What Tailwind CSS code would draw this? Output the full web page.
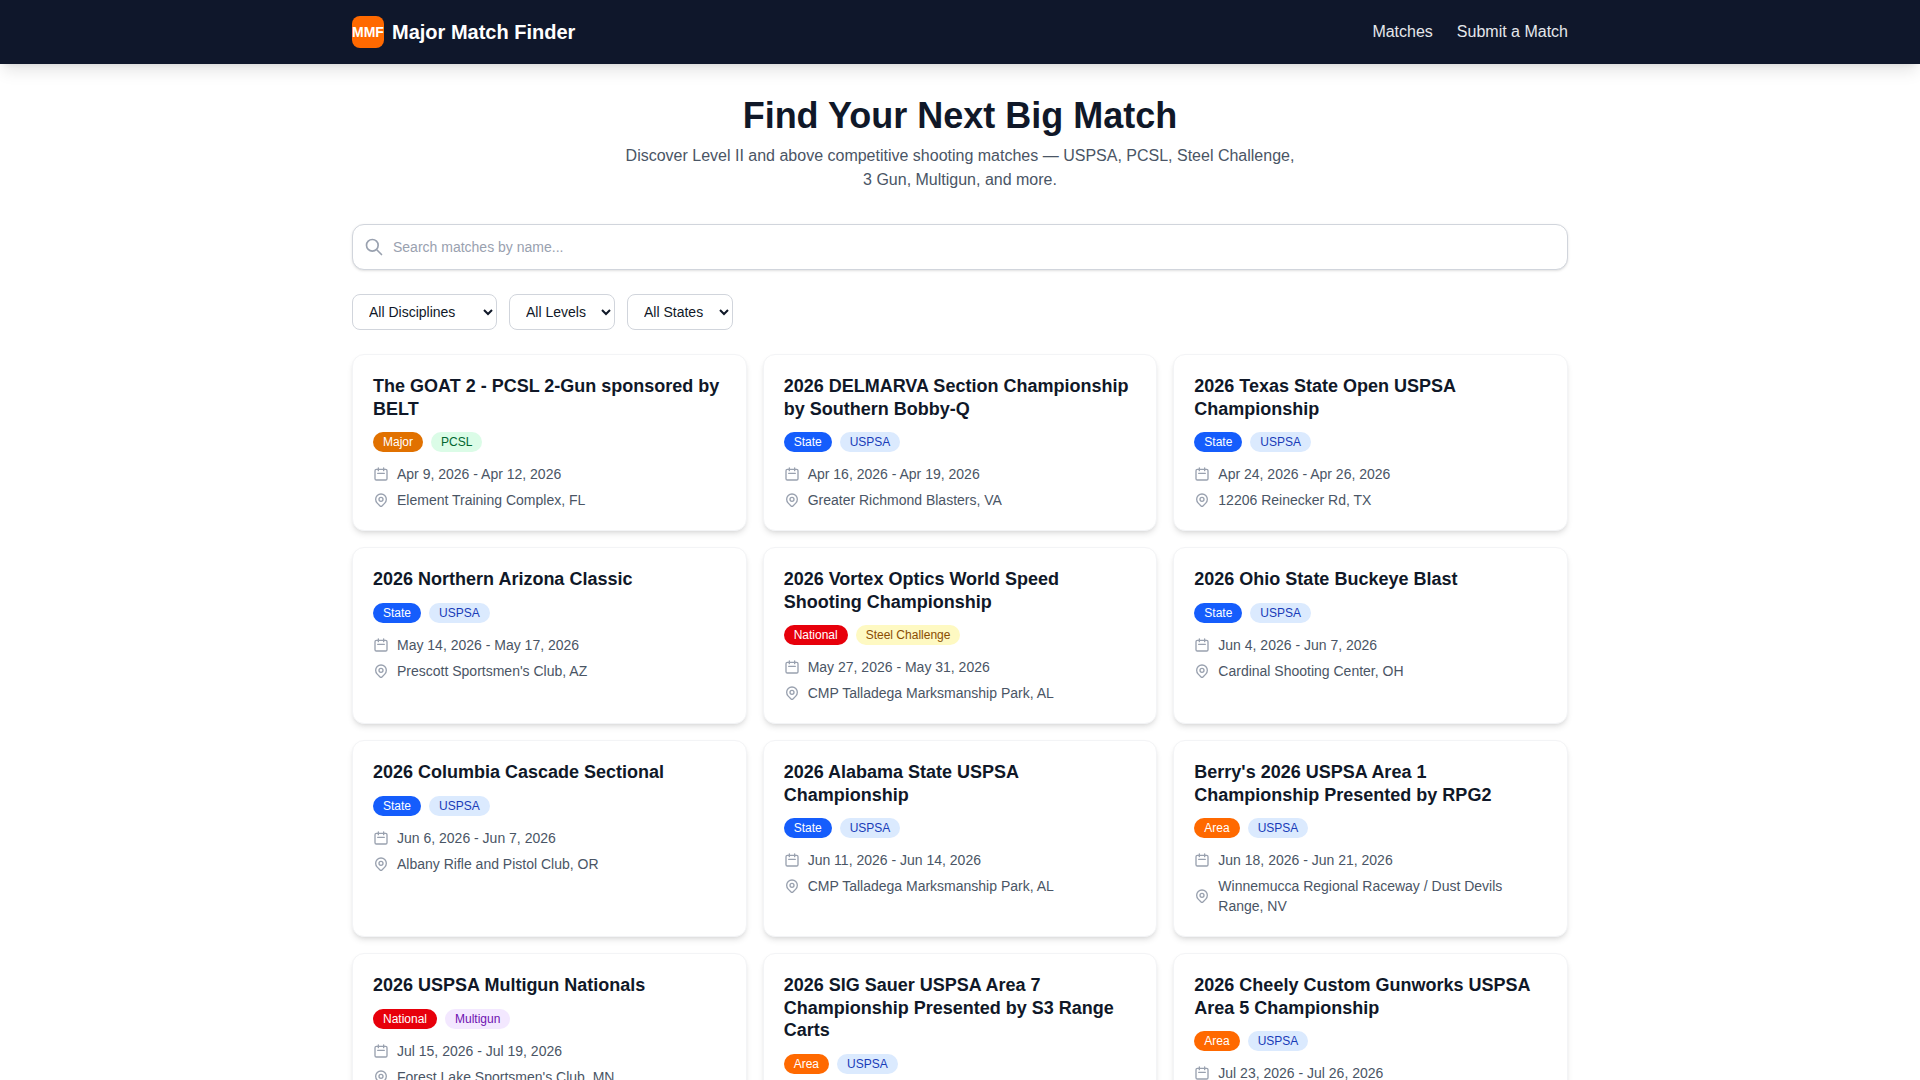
<!DOCTYPE html>
<html lang="en">
<head>
<meta charset="utf-8">
<title>Major Match Finder</title>
<script src="https://cdn.jsdelivr.net/npm/@tailwindcss/browser@4"></script>
</head>
<body class="bg-white text-gray-900 font-['Liberation_Sans',Arial,sans-serif]">
<svg class="hidden"><defs>
  <symbol id="cal" viewBox="0 0 24 24"><path d="M8 7V3m8 4V3m-9 8h10M5 21h14a2 2 0 002-2V7a2 2 0 00-2-2H5a2 2 0 00-2 2v12a2 2 0 002 2z"/></symbol>
  <symbol id="pin" viewBox="0 0 24 24"><path d="M17.657 16.657L13.414 20.9a1.998 1.998 0 01-2.827 0l-4.244-4.243a8 8 0 1111.314 0z"/><path d="M15 11a3 3 0 11-6 0 3 3 0 016 0z"/></symbol>
</defs></svg>
<header class="bg-slate-900 h-16 shadow-lg relative">
  <div class="max-w-[1280px] mx-auto px-8 h-full flex items-center justify-between">
    <a class="flex items-center gap-2 text-white font-bold text-xl">
      <span class="w-8 h-8 rounded-lg bg-orange-500 flex items-center justify-center text-sm font-bold overflow-hidden">MMF</span>
      <span>Major Match Finder</span>
    </a>
    <nav class="flex items-center gap-6 text-gray-200 text-base">
      <a>Matches</a>
      <a>Submit a Match</a>
    </nav>
  </div>
</header>
<main class="max-w-[1280px] mx-auto px-8 pt-8">
  <section class="text-center mb-8">
    <h1 class="text-4xl leading-10 font-bold text-gray-900 mb-2">Find Your Next Big Match</h1>
    <p class="text-base leading-6 text-gray-600 max-w-[42rem] mx-auto">Discover Level II and above competitive shooting matches — USPSA, PCSL, Steel Challenge, 3 Gun, Multigun, and more.</p>
  </section>
  <div class="relative mb-6">
    <svg class="absolute left-3 top-1/2 -translate-y-1/2 w-5 h-5 text-gray-400" fill="none" stroke="currentColor" stroke-width="2" stroke-linecap="round" stroke-linejoin="round" viewBox="0 0 24 24"><path d="M21 21l-6-6m2-5a7 7 0 11-14 0 7 7 0 0114 0z"/></svg>
    <input class="w-full h-[46px] pl-10 pr-4 text-sm rounded-xl border border-gray-300 bg-white shadow-sm placeholder:text-gray-400" placeholder="Search matches by name...">
  </div>
  <div class="flex gap-3 mb-6">
    <select class="h-9 px-3 text-sm rounded-lg border border-gray-300 bg-white text-gray-900"><option>All Disciplines</option><option>USPSA</option><option>PCSL</option><option>Steel Challenge</option><option>3 Gun</option><option>Multigun</option></select>
    <select class="h-9 px-3 text-sm rounded-lg border border-gray-300 bg-white text-gray-900"><option>All Levels</option><option>Area</option><option>State</option><option>National</option><option>Major</option></select>
    <select class="h-9 px-3 text-sm rounded-lg border border-gray-300 bg-white text-gray-900"><option>All States</option><option>AL</option><option>AZ</option><option>FL</option><option>MN</option><option>NV</option><option>OH</option><option>OR</option><option>TX</option><option>VA</option></select>
  </div>
  <div class="grid grid-cols-3 gap-4">

    <article class="rounded-xl border border-gray-100 bg-white p-5 shadow-md">
      <h3 class="text-lg leading-tight font-bold text-gray-900 mb-3">The GOAT 2 - PCSL 2-Gun sponsored by BELT</h3>
      <div class="flex gap-2 mb-3"><span class="h-5 px-2.5 rounded-full bg-amber-600 text-white text-xs leading-5">Major</span><span class="h-5 px-2.5 rounded-full bg-green-100 text-green-800 text-xs leading-5">PCSL</span></div>
      <div class="flex flex-col gap-1.5 text-sm text-gray-600">
        <div class="flex items-center gap-2"><svg class="w-4 h-4 shrink-0 text-gray-400" fill="none" stroke="currentColor" stroke-width="2" stroke-linecap="round" stroke-linejoin="round"><use href="#cal"/></svg><span>Apr 9, 2026 - Apr 12, 2026</span></div>
        <div class="flex items-center gap-2"><svg class="w-4 h-4 shrink-0 text-gray-400" fill="none" stroke="currentColor" stroke-width="2" stroke-linecap="round" stroke-linejoin="round"><use href="#pin"/></svg><span>Element Training Complex, FL</span></div>
      </div>
    </article>

    <article class="rounded-xl border border-gray-100 bg-white p-5 shadow-md">
      <h3 class="text-lg leading-tight font-bold text-gray-900 mb-3">2026 DELMARVA Section Championship by Southern Bobby-Q</h3>
      <div class="flex gap-2 mb-3"><span class="h-5 px-2.5 rounded-full bg-blue-600 text-white text-xs leading-5">State</span><span class="h-5 px-2.5 rounded-full bg-blue-100 text-blue-800 text-xs leading-5">USPSA</span></div>
      <div class="flex flex-col gap-1.5 text-sm text-gray-600">
        <div class="flex items-center gap-2"><svg class="w-4 h-4 shrink-0 text-gray-400" fill="none" stroke="currentColor" stroke-width="2" stroke-linecap="round" stroke-linejoin="round"><use href="#cal"/></svg><span>Apr 16, 2026 - Apr 19, 2026</span></div>
        <div class="flex items-center gap-2"><svg class="w-4 h-4 shrink-0 text-gray-400" fill="none" stroke="currentColor" stroke-width="2" stroke-linecap="round" stroke-linejoin="round"><use href="#pin"/></svg><span>Greater Richmond Blasters, VA</span></div>
      </div>
    </article>

    <article class="rounded-xl border border-gray-100 bg-white p-5 shadow-md">
      <h3 class="text-lg leading-tight font-bold text-gray-900 mb-3">2026 Texas State Open USPSA Championship</h3>
      <div class="flex gap-2 mb-3"><span class="h-5 px-2.5 rounded-full bg-blue-600 text-white text-xs leading-5">State</span><span class="h-5 px-2.5 rounded-full bg-blue-100 text-blue-800 text-xs leading-5">USPSA</span></div>
      <div class="flex flex-col gap-1.5 text-sm text-gray-600">
        <div class="flex items-center gap-2"><svg class="w-4 h-4 shrink-0 text-gray-400" fill="none" stroke="currentColor" stroke-width="2" stroke-linecap="round" stroke-linejoin="round"><use href="#cal"/></svg><span>Apr 24, 2026 - Apr 26, 2026</span></div>
        <div class="flex items-center gap-2"><svg class="w-4 h-4 shrink-0 text-gray-400" fill="none" stroke="currentColor" stroke-width="2" stroke-linecap="round" stroke-linejoin="round"><use href="#pin"/></svg><span>12206 Reinecker Rd, TX</span></div>
      </div>
    </article>

    <article class="rounded-xl border border-gray-100 bg-white p-5 shadow-md">
      <h3 class="text-lg leading-tight font-bold text-gray-900 mb-3">2026 Northern Arizona Classic</h3>
      <div class="flex gap-2 mb-3"><span class="h-5 px-2.5 rounded-full bg-blue-600 text-white text-xs leading-5">State</span><span class="h-5 px-2.5 rounded-full bg-blue-100 text-blue-800 text-xs leading-5">USPSA</span></div>
      <div class="flex flex-col gap-1.5 text-sm text-gray-600">
        <div class="flex items-center gap-2"><svg class="w-4 h-4 shrink-0 text-gray-400" fill="none" stroke="currentColor" stroke-width="2" stroke-linecap="round" stroke-linejoin="round"><use href="#cal"/></svg><span>May 14, 2026 - May 17, 2026</span></div>
        <div class="flex items-center gap-2"><svg class="w-4 h-4 shrink-0 text-gray-400" fill="none" stroke="currentColor" stroke-width="2" stroke-linecap="round" stroke-linejoin="round"><use href="#pin"/></svg><span>Prescott Sportsmen's Club, AZ</span></div>
      </div>
    </article>

    <article class="rounded-xl border border-gray-100 bg-white p-5 shadow-md">
      <h3 class="text-lg leading-tight font-bold text-gray-900 mb-3">2026 Vortex Optics World Speed Shooting Championship</h3>
      <div class="flex gap-2 mb-3"><span class="h-5 px-2.5 rounded-full bg-red-600 text-white text-xs leading-5">National</span><span class="h-5 px-2.5 rounded-full bg-yellow-100 text-yellow-800 text-xs leading-5">Steel Challenge</span></div>
      <div class="flex flex-col gap-1.5 text-sm text-gray-600">
        <div class="flex items-center gap-2"><svg class="w-4 h-4 shrink-0 text-gray-400" fill="none" stroke="currentColor" stroke-width="2" stroke-linecap="round" stroke-linejoin="round"><use href="#cal"/></svg><span>May 27, 2026 - May 31, 2026</span></div>
        <div class="flex items-center gap-2"><svg class="w-4 h-4 shrink-0 text-gray-400" fill="none" stroke="currentColor" stroke-width="2" stroke-linecap="round" stroke-linejoin="round"><use href="#pin"/></svg><span>CMP Talladega Marksmanship Park, AL</span></div>
      </div>
    </article>

    <article class="rounded-xl border border-gray-100 bg-white p-5 shadow-md">
      <h3 class="text-lg leading-tight font-bold text-gray-900 mb-3">2026 Ohio State Buckeye Blast</h3>
      <div class="flex gap-2 mb-3"><span class="h-5 px-2.5 rounded-full bg-blue-600 text-white text-xs leading-5">State</span><span class="h-5 px-2.5 rounded-full bg-blue-100 text-blue-800 text-xs leading-5">USPSA</span></div>
      <div class="flex flex-col gap-1.5 text-sm text-gray-600">
        <div class="flex items-center gap-2"><svg class="w-4 h-4 shrink-0 text-gray-400" fill="none" stroke="currentColor" stroke-width="2" stroke-linecap="round" stroke-linejoin="round"><use href="#cal"/></svg><span>Jun 4, 2026 - Jun 7, 2026</span></div>
        <div class="flex items-center gap-2"><svg class="w-4 h-4 shrink-0 text-gray-400" fill="none" stroke="currentColor" stroke-width="2" stroke-linecap="round" stroke-linejoin="round"><use href="#pin"/></svg><span>Cardinal Shooting Center, OH</span></div>
      </div>
    </article>

    <article class="rounded-xl border border-gray-100 bg-white p-5 shadow-md">
      <h3 class="text-lg leading-tight font-bold text-gray-900 mb-3">2026 Columbia Cascade Sectional</h3>
      <div class="flex gap-2 mb-3"><span class="h-5 px-2.5 rounded-full bg-blue-600 text-white text-xs leading-5">State</span><span class="h-5 px-2.5 rounded-full bg-blue-100 text-blue-800 text-xs leading-5">USPSA</span></div>
      <div class="flex flex-col gap-1.5 text-sm text-gray-600">
        <div class="flex items-center gap-2"><svg class="w-4 h-4 shrink-0 text-gray-400" fill="none" stroke="currentColor" stroke-width="2" stroke-linecap="round" stroke-linejoin="round"><use href="#cal"/></svg><span>Jun 6, 2026 - Jun 7, 2026</span></div>
        <div class="flex items-center gap-2"><svg class="w-4 h-4 shrink-0 text-gray-400" fill="none" stroke="currentColor" stroke-width="2" stroke-linecap="round" stroke-linejoin="round"><use href="#pin"/></svg><span>Albany Rifle and Pistol Club, OR</span></div>
      </div>
    </article>

    <article class="rounded-xl border border-gray-100 bg-white p-5 shadow-md">
      <h3 class="text-lg leading-tight font-bold text-gray-900 mb-3">2026 Alabama State USPSA Championship</h3>
      <div class="flex gap-2 mb-3"><span class="h-5 px-2.5 rounded-full bg-blue-600 text-white text-xs leading-5">State</span><span class="h-5 px-2.5 rounded-full bg-blue-100 text-blue-800 text-xs leading-5">USPSA</span></div>
      <div class="flex flex-col gap-1.5 text-sm text-gray-600">
        <div class="flex items-center gap-2"><svg class="w-4 h-4 shrink-0 text-gray-400" fill="none" stroke="currentColor" stroke-width="2" stroke-linecap="round" stroke-linejoin="round"><use href="#cal"/></svg><span>Jun 11, 2026 - Jun 14, 2026</span></div>
        <div class="flex items-center gap-2"><svg class="w-4 h-4 shrink-0 text-gray-400" fill="none" stroke="currentColor" stroke-width="2" stroke-linecap="round" stroke-linejoin="round"><use href="#pin"/></svg><span>CMP Talladega Marksmanship Park, AL</span></div>
      </div>
    </article>

    <article class="rounded-xl border border-gray-100 bg-white p-5 shadow-md">
      <h3 class="text-lg leading-tight font-bold text-gray-900 mb-3">Berry's 2026 USPSA Area 1 Championship Presented by RPG2</h3>
      <div class="flex gap-2 mb-3"><span class="h-5 px-2.5 rounded-full bg-orange-500 text-white text-xs leading-5">Area</span><span class="h-5 px-2.5 rounded-full bg-blue-100 text-blue-800 text-xs leading-5">USPSA</span></div>
      <div class="flex flex-col gap-1.5 text-sm text-gray-600">
        <div class="flex items-center gap-2"><svg class="w-4 h-4 shrink-0 text-gray-400" fill="none" stroke="currentColor" stroke-width="2" stroke-linecap="round" stroke-linejoin="round"><use href="#cal"/></svg><span>Jun 18, 2026 - Jun 21, 2026</span></div>
        <div class="flex items-center gap-2"><svg class="w-4 h-4 shrink-0 text-gray-400" fill="none" stroke="currentColor" stroke-width="2" stroke-linecap="round" stroke-linejoin="round"><use href="#pin"/></svg><span>Winnemucca Regional Raceway / Dust Devils Range, NV</span></div>
      </div>
    </article>

    <article class="rounded-xl border border-gray-100 bg-white p-5 shadow-md">
      <h3 class="text-lg leading-tight font-bold text-gray-900 mb-3">2026 USPSA Multigun Nationals</h3>
      <div class="flex gap-2 mb-3"><span class="h-5 px-2.5 rounded-full bg-red-600 text-white text-xs leading-5">National</span><span class="h-5 px-2.5 rounded-full bg-purple-100 text-purple-800 text-xs leading-5">Multigun</span></div>
      <div class="flex flex-col gap-1.5 text-sm text-gray-600">
        <div class="flex items-center gap-2"><svg class="w-4 h-4 shrink-0 text-gray-400" fill="none" stroke="currentColor" stroke-width="2" stroke-linecap="round" stroke-linejoin="round"><use href="#cal"/></svg><span>Jul 15, 2026 - Jul 19, 2026</span></div>
        <div class="flex items-center gap-2"><svg class="w-4 h-4 shrink-0 text-gray-400" fill="none" stroke="currentColor" stroke-width="2" stroke-linecap="round" stroke-linejoin="round"><use href="#pin"/></svg><span>Forest Lake Sportsmen's Club, MN</span></div>
      </div>
    </article>

    <article class="rounded-xl border border-gray-100 bg-white p-5 shadow-md">
      <h3 class="text-lg leading-tight font-bold text-gray-900 mb-3">2026 SIG Sauer USPSA Area 7 Championship Presented by S3 Range Carts</h3>
      <div class="flex gap-2 mb-3"><span class="h-5 px-2.5 rounded-full bg-orange-500 text-white text-xs leading-5">Area</span><span class="h-5 px-2.5 rounded-full bg-blue-100 text-blue-800 text-xs leading-5">USPSA</span></div>
    </article>

    <article class="rounded-xl border border-gray-100 bg-white p-5 shadow-md">
      <h3 class="text-lg leading-tight font-bold text-gray-900 mb-3">2026 Cheely Custom Gunworks USPSA Area 5 Championship</h3>
      <div class="flex gap-2 mb-3"><span class="h-5 px-2.5 rounded-full bg-orange-500 text-white text-xs leading-5">Area</span><span class="h-5 px-2.5 rounded-full bg-blue-100 text-blue-800 text-xs leading-5">USPSA</span></div>
      <div class="flex flex-col gap-1.5 text-sm text-gray-600">
        <div class="flex items-center gap-2"><svg class="w-4 h-4 shrink-0 text-gray-400" fill="none" stroke="currentColor" stroke-width="2" stroke-linecap="round" stroke-linejoin="round"><use href="#cal"/></svg><span>Jul 23, 2026 - Jul 26, 2026</span></div>
      </div>
    </article>

  </div>
</main>
</body>
</html>
